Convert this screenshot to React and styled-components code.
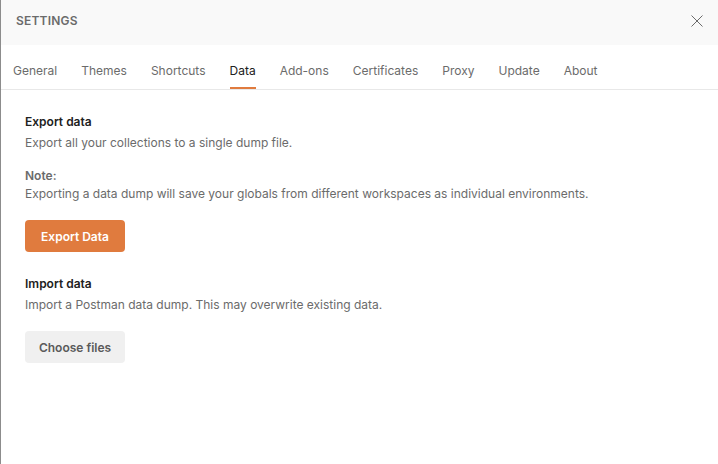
import React from 'react'
import styled, { createGlobalStyle } from 'styled-components'

const ORANGE = '#e07b3e'

const GlobalStyle = createGlobalStyle`
  html, body {
    margin: 0;
    padding: 0;
    background: #ffffff;
  }
  body {
    font-family: Inter, "Noto Sans", sans-serif;
    -webkit-font-smoothing: antialiased;
  }
`

const Modal = styled.div`
  width: 718px;
  height: 464px;
  box-sizing: border-box;
  border-left: 1px solid #8c8c8c;
  background: #ffffff;
  display: flex;
  flex-direction: column;
`

const Header = styled.div`
  height: 45px;
  flex-shrink: 0;
  background: #f9f9f9;
  display: flex;
  align-items: center;
  justify-content: space-between;
  padding: 0 14px 0 15px;
`

const Title = styled.div`
  font-size: 12px;
  font-weight: 600;
  color: #6b6b6b;
  letter-spacing: 0.2px;
  margin-top: -4px;
`

const CloseButton = styled.button`
  border: 0;
  background: none;
  padding: 0;
  width: 14px;
  height: 14px;
  display: flex;
  align-items: center;
  justify-content: center;
  cursor: pointer;
  margin-top: -4px;
`

const Tabs = styled.div`
  display: flex;
  gap: 24px;
  height: 44px;
  padding-left: 12px;
  border-bottom: 1px solid #e8e8e8;
  flex-shrink: 0;
`

const Tab = styled.div`
  display: flex;
  align-items: flex-start;
  padding-top: 16px;
  box-sizing: border-box;
  height: 44px;
  font-size: 12px;
  line-height: 20px;
  color: ${p => (p.active ? '#212121' : '#6b6b6b')};
  border-bottom: 2px solid ${p => (p.active ? ORANGE : 'transparent')};
`

const Content = styled.div`
  padding: 23px 24px 0 24px;
  display: flex;
  flex-direction: column;
  align-items: flex-start;
`

const SectionTitle = styled.div`
  font-size: 12px;
  line-height: 18px;
  font-weight: 600;
  color: #212121;
  margin-top: ${p => p.gap || 0}px;
`

const Text = styled.div`
  font-size: 12px;
  line-height: 18px;
  color: #6b6b6b;
  margin-top: ${p => p.gap || 0}px;
`

const NoteLabel = styled(Text)`
  font-weight: 600;
`

const Button = styled.button`
  margin-top: 17px;
  width: 100px;
  height: 32px;
  border: 0;
  border-radius: 4px;
  font-family: inherit;
  font-size: 12px;
  font-weight: 600;
  cursor: pointer;
  background: ${p => (p.primary ? ORANGE : '#f0f0f0')};
  color: ${p => (p.primary ? '#ffffff' : '#5a5a5a')};
`

const tabs = ['General', 'Themes', 'Shortcuts', 'Data', 'Add-ons', 'Certificates', 'Proxy', 'Update', 'About']

const CloseIcon = () => (
  <svg width="12" height="12" viewBox="0 0 12 12">
    <path d="M0.5 0.5 L11.5 11.5 M11.5 0.5 L0.5 11.5" stroke="#6b6b6b" strokeWidth="1" fill="none" />
  </svg>
)

export default function App() {
  return (
    <>
      <GlobalStyle />
      <Modal>
        <Header>
          <Title>SETTINGS</Title>
          <CloseButton aria-label="Close">
            <CloseIcon />
          </CloseButton>
        </Header>
        <Tabs>
          {tabs.map(t => (
            <Tab key={t} active={t === 'Data'}>{t}</Tab>
          ))}
        </Tabs>
        <Content>
          <SectionTitle>Export data</SectionTitle>
          <Text gap={3}>Export all your collections to a single dump file.</Text>
          <NoteLabel gap={15}>Note:</NoteLabel>
          <Text>Exporting a data dump will save your globals from different workspaces as individual environments.</Text>
          <Button primary>Export Data</Button>
          <SectionTitle gap={23}>Import data</SectionTitle>
          <Text gap={3}>Import a Postman data dump. This may overwrite existing data.</Text>
          <Button>Choose files</Button>
        </Content>
      </Modal>
    </>
  )
}
